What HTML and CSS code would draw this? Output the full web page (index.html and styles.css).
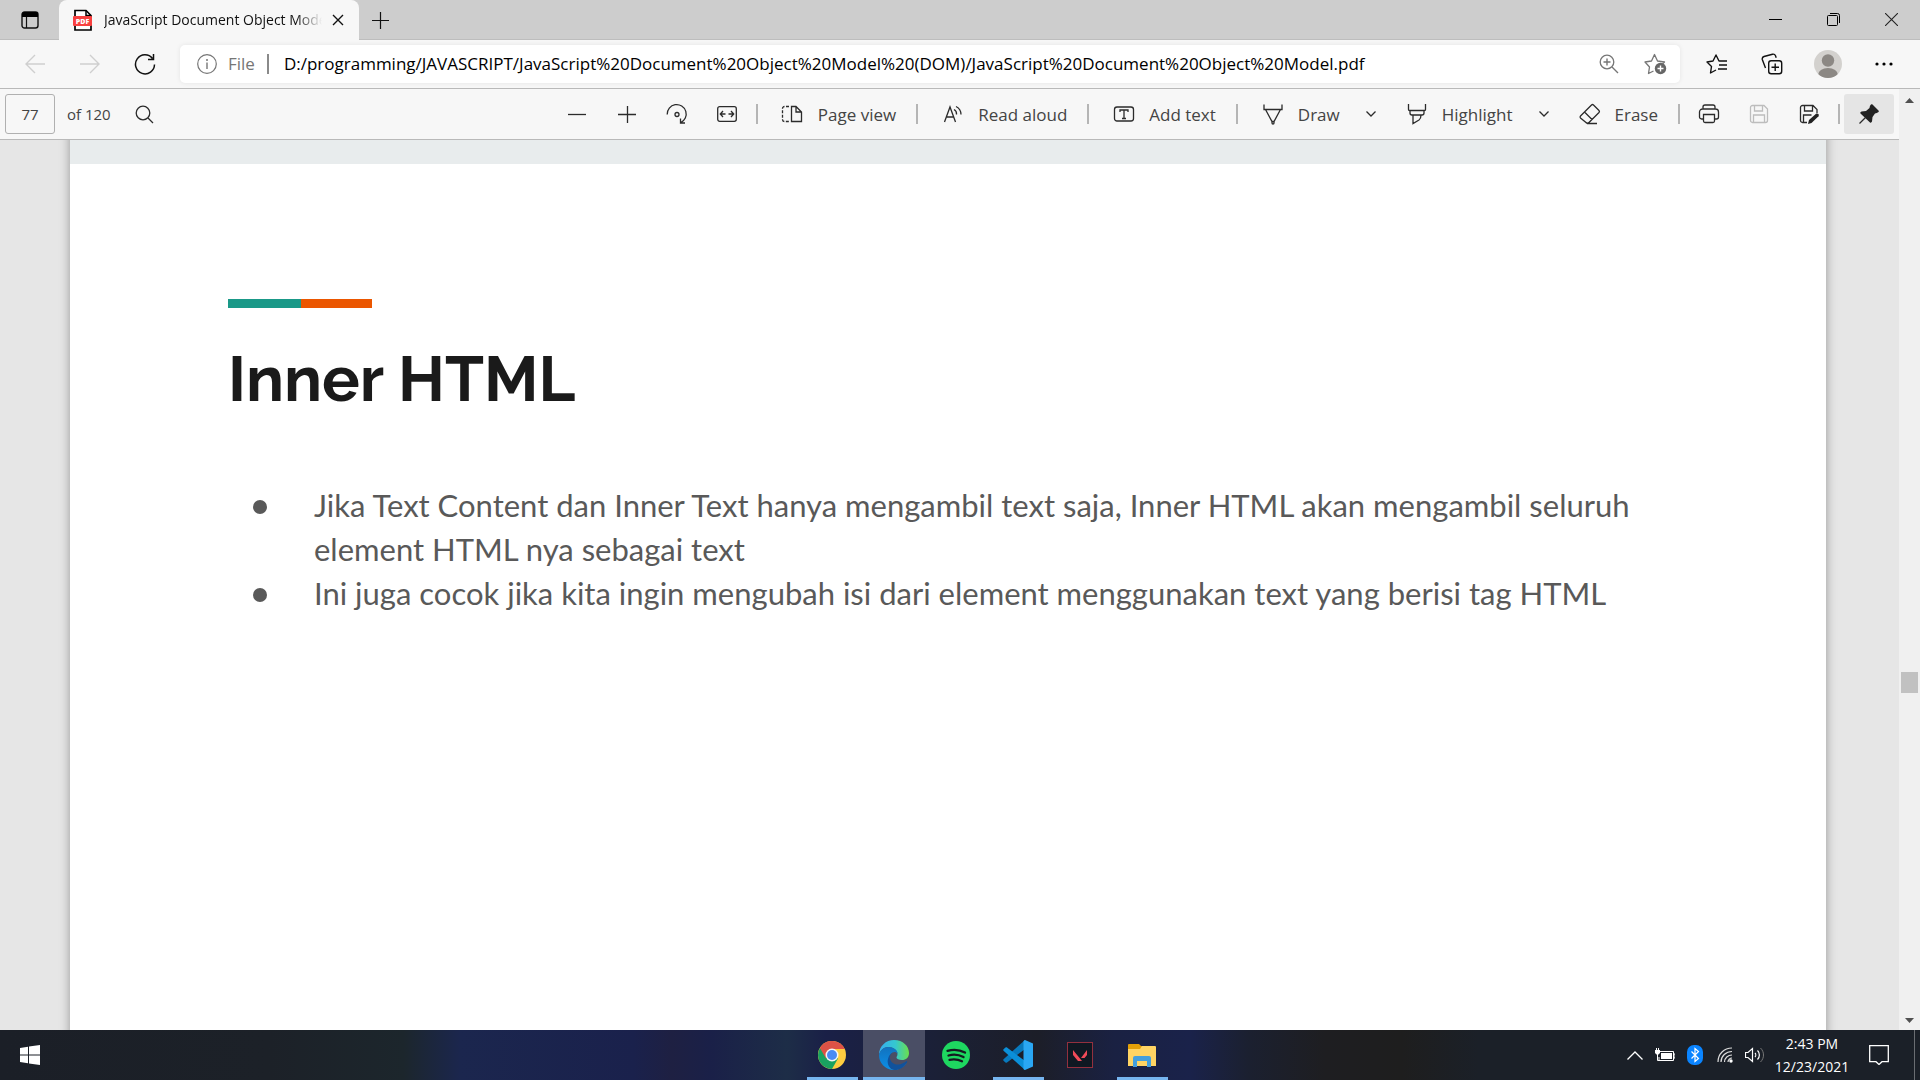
FILE: index.html
```html
<!DOCTYPE html>
<html lang="en">
<head>
<meta charset="utf-8">
<title>JavaScript Document Object Model.pdf</title>
<link rel="stylesheet" href="styles.css">
</head>
<body>
<header class="tabstrip">
  <button class="tab-actions" aria-label="Tab actions"><svg width="18" height="18" viewBox="0 0 18 18"><rect x="1" y="1" width="16" height="16" rx="2.5" fill="none" stroke="#111" stroke-width="1.4"/><path d="M1 6V3a2 2 0 0 1 2-2h12a2 2 0 0 1 2 2v3z" fill="#000"/><path d="M5.5 6v11" stroke="#111" stroke-width="1.2"/></svg></button>
  <div class="tab">
    <svg class="pdf-icon" width="20" height="22" viewBox="0 0 20 22"><path d="M2 1.500h11l5 5V21H2z" fill="#fff" stroke="#000" stroke-width="1.700"/><path d="M13 1.500v5h5" fill="none" stroke="#000" stroke-width="1.500"/><rect x="0" y="7" width="19" height="10" rx="1" fill="#f8403f"/><text x="9.500" y="15" text-anchor="middle" class="pdf-label">PDF</text></svg>
    <span class="tab-title">JavaScript Document Object Model</span>
    <button class="tab-close" aria-label="Close tab"><svg width="12" height="12" viewBox="0 0 12 12"><path d="M1 1l10 10M11 1L1 11" stroke="#111" stroke-width="1.4"/></svg></button>
  </div>
  <button class="new-tab" aria-label="New tab"><svg width="18" height="18" viewBox="0 0 18 18"><path d="M8.500 1v17M0 9.500h17" stroke="#111" stroke-width="1.2"/></svg></button>
  <div class="window-controls">
    <button aria-label="Minimize"><svg width="13" height="13" viewBox="0 0 13 13"><path d="M0 6.500h13" stroke="#000"/></svg></button>
    <button aria-label="Restore"><svg width="13" height="13" viewBox="0 0 13 13"><rect x=".5" y="2.500" width="10" height="10" rx="1" fill="none" stroke="#000"/><path d="M3 .5h7.500a2 2 0 0 1 2 2V10" fill="none" stroke="#000"/></svg></button>
    <button aria-label="Close"><svg width="13" height="13" viewBox="0 0 13 13"><path d="M0 0l13 13M13 0L0 13" stroke="#222" stroke-width="1.1"/></svg></button>
  </div>
</header>

<nav class="navbar">
  <div class="nav-buttons">
    <button aria-label="Back" disabled><svg width="20" height="20" viewBox="0 0 20 20"><path d="M20 10H1M10 1L1 10l9 9" fill="none" stroke="#cfcfcf" stroke-width="1.4"/></svg></button>
    <button aria-label="Forward" disabled><svg width="20" height="20" viewBox="0 0 20 20"><path d="M0 10h19M10 1l9 9-9 9" fill="none" stroke="#cfcfcf" stroke-width="1.4"/></svg></button>
    <button aria-label="Refresh"><svg width="22" height="22" viewBox="0 0 22 22"><path d="M20.500 11.500A9.500 9.500 0 1 1 18.500 5.500M19.500 1v5.500H14" fill="none" stroke="#111" stroke-width="1.5"/></svg></button>
  </div>
  <div class="address">
    <button class="site-info"><svg width="20" height="20" viewBox="0 0 20 20"><circle cx="10" cy="10" r="9.300" fill="none" stroke="#767676" stroke-width="1.2"/><path d="M10 8.500V15" stroke="#767676" stroke-width="1.4"/><circle cx="10" cy="6" r="1" fill="#767676"/></svg><span>File</span></button>
    <span class="address-divider"></span>
    <input class="url" aria-label="Address" value="D:/programming/JAVASCRIPT/JavaScript%20Document%20Object%20Model%20(DOM)/JavaScript%20Document%20Object%20Model.pdf">
    <button class="address-button" aria-label="Zoom"><svg width="20" height="20" viewBox="0 0 20 20"><circle cx="8" cy="8" r="6.800" fill="none" stroke="#767676" stroke-width="1.3"/><path d="M13 13l6 6M8 4.500v7M4.500 8h7" stroke="#767676" stroke-width="1.4"/></svg></button>
    <button class="address-button" aria-label="Add to favorites"><svg width="23" height="22" viewBox="0 0 23 22"><path d="M9.500 18L4.500 20.500l1-6.500L1 9l6.500-1L10.500 1.500 13.500 8l7 1-2 2" fill="none" stroke="#767676" stroke-width="1.3" stroke-linejoin="round"/><circle cx="16.500" cy="15.500" r="5.700" fill="#666"/><path d="M16.500 12.500v6M13.500 15.500h6" stroke="#fff" stroke-width="1.4"/></svg></button>
  </div>
  <div class="nav-actions">
    <button aria-label="Favorites"><svg width="21" height="20" viewBox="0 0 21 20"><path d="M10 16l-5.500 3 1-6.500L1 8l6-1 3-6 3 6h8M13 11h8M12 15h9" fill="none" stroke="#111" stroke-width="1.4" stroke-linejoin="round"/></svg></button>
    <button aria-label="Collections"><svg width="22" height="22" viewBox="0 0 22 22"><rect x="7.700" y="7.700" width="13" height="13" rx="2.500" fill="none" stroke="#111" stroke-width="1.4"/><path d="M14.200 10.500v7.500M10.500 14.200H18M4.500 15L1.300 6.500C1 5 1.500 4 3 3.500l8.500-2.300c1.500-.3 2.500.3 3 1.500l.7 2" fill="none" stroke="#111" stroke-width="1.4"/></svg></button>
    <button aria-label="Profile"><svg width="28" height="28" viewBox="0 0 28 28"><clipPath id="avatar"><circle cx="14" cy="14" r="14"/></clipPath><g clip-path="url(#avatar)"><path d="M0 0h28v28H0z" fill="#d3d1ce"/><circle cx="14" cy="10.500" r="6.200" fill="#8c8884"/><ellipse cx="14" cy="25" rx="10" ry="7" fill="#8c8884"/></g></svg></button>
    <button aria-label="Settings and more"><svg width="18" height="4" viewBox="0 0 18 4"><g fill="#000"><circle cx="2" cy="2" r="1.600"/><circle cx="9" cy="2" r="1.600"/><circle cx="16" cy="2" r="1.600"/></g></svg></button>
  </div>
</nav>

<div class="viewer">
<main class="pane">
  <div class="toolbar">
    <input class="page-number" aria-label="Page number" value="77">
    <span class="page-count">of 120</span>
    <button class="tool search" aria-label="Search"><svg width="19" height="19" viewBox="0 0 19 19"><circle cx="8" cy="8" r="6.800"/><path d="M13 13l5 5"/></svg></button>
    <div class="tools">
      <button class="tool" aria-label="Zoom out"><svg width="18" height="18" viewBox="0 0 18 18"><path d="M0 9.500h18"/></svg></button>
      <button class="tool" aria-label="Zoom in"><svg width="18" height="18" viewBox="0 0 18 18"><path d="M0 9.500h18M9.500 1v17"/></svg></button>
      <button class="tool" aria-label="Rotate"><svg width="22" height="22" viewBox="0 0 22 22"><path d="M1.200 11.500A9.500 9.500 0 1 1 14.500 19.800M14.500 15.500v4.500h4.500"/><circle cx="11" cy="11.500" r="2"/></svg></button>
      <button class="tool" aria-label="Fit to width"><svg width="20" height="16" viewBox="0 0 20 16"><rect x=".7" y=".7" width="18.600" height="14.600" rx="2"/><path d="M3.500 8h5M11.500 8h5M6 5L3.300 8 6 11M14 5l2.700 3L14 11"/></svg></button>
      <span class="divider"></span>
      <button class="tool labelled"><svg width="24" height="20" viewBox="0 0 24 20"><path d="M10.500 2.700V17.500h10V8l-5.500-5.500h-4.500zM15 2.500V8h5.500"/><path d="M8 2.500H3.500a2 2 0 0 0-2 2v11a2 2 0 0 0 2 2H8" stroke-dasharray="3 1.500"/></svg><span>Page view</span></button>
      <span class="divider"></span>
      <button class="tool labelled"><svg width="24" height="20" viewBox="0 0 24 20"><path d="M3.500 18L9 3l5.500 15M5.300 13h7.400M13 5.500a5 5 0 0 1 2.500 5M15 2.500a9 9 0 0 1 5 8"/></svg><span>Read aloud</span></button>
      <span class="divider"></span>
      <button class="tool labelled"><svg width="24" height="20" viewBox="0 0 24 20"><rect x="2.500" y="3" width="19" height="14" rx="2.500"/><path d="M8 8V6h8v2M12 6v8.500M10 14.500h4"/></svg><span>Add text</span></button>
      <span class="divider"></span>
      <button class="tool labelled"><svg width="24" height="22" viewBox="0 0 24 22"><path d="M3 1.500v5h18v-5M4.500 6.500L11 18.500h2l6.500-12M11 18.500V20a1 1 0 0 0 2 0v-1.500"/></svg><span>Draw</span></button>
      <button class="tool menu" aria-label="Draw options"><svg width="10" height="6" viewBox="0 0 10 6"><path d="M.5.500L5 5 9.500.500"/></svg></button>
      <button class="tool labelled"><svg width="24" height="22" viewBox="0 0 24 22"><path d="M3.500 1v5.500a1 1 0 0 0 1 1h15a1 1 0 0 0 1-1V1M5 7.500v2.500a2 2 0 0 0 2 2h10a2 2 0 0 0 2-2V7.500M8 12v8.500l6-3.500c1.500-1 2-2 2-5"/></svg><span>Highlight</span></button>
      <button class="tool menu" aria-label="Highlight options"><svg width="10" height="6" viewBox="0 0 10 6"><path d="M.5.500L5 5 9.500.500"/></svg></button>
      <button class="tool labelled"><svg width="24" height="22" viewBox="0 0 24 22"><path d="M2.500 13L13.500 2a1.500 1.500 0 0 1 2 0l5.500 5.500a1.500 1.500 0 0 1 0 2L11 19.500a2 2 0 0 1-3 0L2.500 15a1.500 1.500 0 0 1 0-2zM6.500 9l7.500 7.500M9 20.500h10"/></svg><span>Erase</span></button>
      <span class="divider"></span>
      <button class="tool" aria-label="Print"><svg width="22" height="20" viewBox="0 0 22 20"><path d="M5 15H3.500a2 2 0 0 1-2-2V8a3 3 0 0 1 3-3h13a3 3 0 0 1 3 3v5a2 2 0 0 1-2 2H17M5 5V3a2 2 0 0 1 2-2h8a2 2 0 0 1 2 2v2M5.500 10.500h11V17a1.500 1.500 0 0 1-1.500 1.500H7A1.500 1.500 0 0 1 5.500 17z"/></svg></button>
      <button class="tool" aria-label="Save" disabled><svg width="20" height="20" viewBox="0 0 20 20"><path d="M1.500 3.500a2 2 0 0 1 2-2H15l3.500 3.500v11.500a2 2 0 0 1-2 2h-13a2 2 0 0 1-2-2zM5.500 1.500V7h8V1.500M4.500 18.500V11h11v7.500"/></svg></button>
      <button class="tool" aria-label="Save as"><svg width="20" height="20" viewBox="0 0 20 20"><path d="M8 18.500H3.500a2 2 0 0 1-2-2v-13a2 2 0 0 1 2-2H14l4 4V9M5.500 1.500V7h8V1.500M4.500 18.500V11h8"/><path class="solid" d="M9 20l1-4 7-6.300c2-1 3.500.8 2.500 2.500L12.500 19z"/></svg></button>
      <span class="divider"></span>
      <button class="tool pinned" aria-label="Unpin toolbar" aria-pressed="true"><svg width="20" height="20" viewBox="0 0 20 20"><path class="solid" d="M12 .5c.5-.5 1-.5 1.500 0l6 6c.5.500.5 1 0 1.500-1 1-2.500 1-3.500 1.500L13.500 13l-.5 4.500c-.5 1-1 1.500-2 1L1.500 9.500c-.5-1 0-1.500 1-2L7 7l3.500-3c.3-1.500.5-2.500 1.500-3.500z"/><path d="M6.500 13.500L.5 19.500"/></svg></button>
    </div>
  </div>
  <div class="canvas">
    <div class="pages">
      <div class="previous-page"></div>
      <article class="slide">
        <div class="accent"></div>
        <h1>Inner HTML</h1>
        <ul>
          <li>Jika Text Content dan Inner Text hanya mengambil text saja, Inner HTML akan mengambil seluruh element HTML nya sebagai text</li>
          <li>Ini juga cocok jika kita ingin mengubah isi dari element menggunakan text yang berisi tag HTML</li>
        </ul>
      </article>
    </div>
  </div>
</main>
<div class="scrollbar">
  <svg width="9" height="5" viewBox="0 0 9 5"><path d="M0 5l4.500-5L9 5z" fill="#505050"/></svg>
  <div class="track"><div class="thumb"></div></div>
  <svg width="9" height="5" viewBox="0 0 9 5"><path d="M0 0l4.500 5L9 0z" fill="#505050"/></svg>
</div>
</div>

<footer class="taskbar">
  <button class="start" aria-label="Start"><svg width="20" height="20" viewBox="0 0 20 20"><path d="M0 3l8-1.200V9.500H0zM9 1.600L20 0v9.500H9zM0 10.500h8v7.700L0 17zM9 10.500h11V20L9 18.400z" fill="#fff"/></svg></button>
  <div class="apps">
    <button class="app running" aria-label="Chrome"><svg width="28" height="28" viewBox="0 0 28 28"><circle cx="14" cy="14" r="14" fill="#ffcd40"/><path d="M14 14L1.900 7A14 14 0 0 0 14 28l6-10.500z" fill="#1aa260"/><path d="M1.900 7A14 14 0 0 1 26.700 8H14L8 17.500z" fill="#de5246"/><circle cx="14" cy="14" r="6.500" fill="#f5f5f5"/><circle cx="14" cy="14" r="5" fill="#4a8af4"/></svg></button>
    <button class="app active" aria-label="Edge"><svg width="30" height="30" viewBox="0 0 30 30"><defs><linearGradient id="edge-top"><stop offset="0" stop-color="#35aef0"/><stop offset=".55" stop-color="#35c7cf"/><stop offset="1" stop-color="#6bdf4b"/></linearGradient><linearGradient id="edge-left" x2="0" y2="1"><stop offset="0" stop-color="#1172be"/><stop offset="1" stop-color="#0c8fe8"/></linearGradient></defs><path d="M0 15C0 6 7 0 15 0c9 0 15 6 15 13 0 4.500-3 7-7 7-3 0-5.500-1-5.500-2.500 0-1 1-1.500 1-3.500C18.500 10 14 7 9 7 4 7 1 11 0 15z" fill="url(#edge-top)"/><path d="M14 29.900C6 29.500 0 23 0 15 1 10 5 7 9.500 7c5 0 9 3 9 6.500-1-1.500-3-2-5-1-6 3-3 13 5 13 4 0 6-.5 9-2.500-3 4.500-8 7.200-13.500 6.900z" fill="url(#edge-left)"/><path d="M13.500 12.500c-6 5-.5 13 6 12 3 0 6-2 8-3.500 1 0 .8 1.200 0 2.200-3 4.300-7 6.800-12 6.800-7-.5-10-12-2-17.500z" fill="#11529c"/></svg></button>
    <button class="app" aria-label="Spotify"><svg width="28" height="28" viewBox="0 0 28 28"><circle cx="14" cy="14" r="14" fill="#1ed760"/><path d="M5.500 9.800c6-1.700 12.500-1 17.500 1.800M6.500 14.500c5-1.400 10.500-.8 15 1.600M7.500 18.800c4.500-1 8.500-.6 12.500 1.500" fill="none" stroke="#151a20" stroke-width="2.300" stroke-linecap="round"/></svg></button>
    <button class="app running" aria-label="Visual Studio Code"><svg width="30" height="30" viewBox="0 0 30 30"><path d="M22 0L.8 19c-.8.800-.8 1.500 0 2l1.700 1.500c.5.300 1 .3 1.500 0L22 9z" fill="#0879bd"/><path d="M4 7.500c-.5-.4-1-.4-1.500 0L.8 9c-.8.500-.8 1.200 0 2L22 30V21z" fill="#0b8fd8"/><path d="M22 0l8 3.500v23L22 30c-1 0-1.500-1-1.500-1.500V1.500S21 0 22 0z" fill="#2aa7f3"/></svg></button>
    <button class="app" aria-label="Valorant"><svg width="26" height="26" viewBox="0 0 26 26"><rect x=".5" y=".5" width="25" height="25" fill="#0f1822" stroke="#93303e"/><path d="M6 8l9 11h-4l-5-6zM20 8v5l-2.500 3H14z" fill="#f04b59"/></svg></button>
    <button class="app running" aria-label="File Explorer"><svg width="28" height="23" viewBox="0 0 28 23"><path d="M0 1a1 1 0 0 1 1-1h10l2 2h14v20H0z" fill="#e3a008"/><path d="M0 5h12l2-3h13a1 1 0 0 1 1 1v19H0z" fill="#ffd463"/><path d="M5 23V14a2 2 0 0 1 2-2h14a2 2 0 0 1 2 2v9h-4v-6H9v6z" fill="#449fdc"/></svg></button>
  </div>
  <div class="tray">
    <button aria-label="Show hidden icons"><svg width="16" height="9" viewBox="0 0 16 9"><path d="M.5 8.500L8 1l7.500 7.500" fill="none" stroke="#fff" stroke-width="1.3"/></svg></button>
    <button aria-label="Battery"><svg width="20" height="14" viewBox="0 0 20 14"><path d="M5 3.500h13.500v9H4V9M18.500 6H20v4h-1.500" fill="none" stroke="#fff"/><path d="M6 5h11v6H6zM0 2h5v3L3.500 6.500h-2L0 5z" fill="#fff"/><path d="M1.500 0v2M3.500 0v2M2.500 6v6.500H5" fill="none" stroke="#fff"/></svg></button>
    <button aria-label="Bluetooth"><svg width="16" height="20" viewBox="0 0 16 20"><rect width="16" height="20" rx="7" fill="#0a84ff"/><path d="M4.500 6.500l7 7L8 16.500v-13L11.500 6.500l-7 7" fill="none" stroke="#fff" stroke-width="1.2"/></svg></button>
    <button aria-label="Wi-Fi"><svg width="16" height="16" viewBox="0 0 16 16"><g fill="none" stroke="#ddd" stroke-width="1.200"><path d="M1 15C1 7 7 1 15 1M4 15C4 9 9 4.500 15 4.500M7.500 15c0-4 3.500-7 7.500-7"/><path d="M11 15c0-2 2-4 4-4"/></g><circle cx="14" cy="14" r="1.700" fill="#fff"/></svg></button>
    <button aria-label="Volume"><svg width="20" height="16" viewBox="0 0 20 16"><path d="M.5 5.500H3L7.500 1.500v13L3 10.500H.5zM10 6c1 1 1 3 0 4M12.500 3.500c2.500 2.500 2.500 6.500 0 9" fill="none" stroke="#fff" stroke-width="1.200"/><path d="M15.500 1c4 4 4 10 0 14" fill="none" stroke="#777"/></svg></button>
    <button class="clock"><span>2:43 PM</span><span>12/23/2021</span></button>
    <button class="notifications" aria-label="Notifications"><svg width="20" height="20" viewBox="0 0 20 20"><path d="M.7.700h18.600v16H13L10 19.500 7 16.700H.7z" fill="none" stroke="#fff" stroke-width="1.300"/></svg></button>
    <button class="show-desktop" aria-label="Show desktop"></button>
  </div>
</footer>
</body>
</html>
```
FILE: styles.css
```css
* { box-sizing: border-box; }
body {
  margin: 0;
  height: 100vh;
  display: flex;
  flex-direction: column;
  overflow: hidden;
  font-family: "Segoe UI", "Open Sans", sans-serif;
  background: #e6e6e6;
}
button {
  display: flex;
  align-items: center;
  justify-content: center;
  margin: 0;
  padding: 0;
  border: 0;
  background: none;
  font: inherit;
  color: inherit;
}
svg { display: block; flex: none; }
input { font: inherit; }

/* Tab strip */
.tabstrip {
  flex: none;
  display: flex;
  height: 40px;
  background: #cdcdcd;
  border-bottom: 1px solid #bdbdbd;
}
.tab-actions { width: 59px; }
.tab {
  display: flex;
  align-items: center;
  width: 300px;
  height: 40px;
  padding: 0 11px 0 14px;
  border-radius: 8px 8px 0 0;
  background: #f7f7f7;
}
.pdf-label { font: 800 7px "Open Sans", sans-serif; fill: #fff; }
.tab-title {
  flex: 1;
  min-width: 0;
  margin-left: 11px;
  overflow: hidden;
  white-space: nowrap;
  font-size: 14px;
  line-height: 20px;
  color: #111;
  mask-image: linear-gradient(to right, #000 88%, transparent);
}
.tab-close { width: 20px; height: 20px; margin-left: 6px; }
.new-tab { width: 44px; }
.window-controls { display: flex; margin-left: auto; }
.window-controls button { width: 58px; }

/* Address row */
.navbar {
  flex: none;
  display: flex;
  align-items: center;
  height: 49px;
  background: #f7f7f7;
  border-bottom: 1px solid #b9b9b9;
}
.nav-buttons { display: flex; padding: 0 8px 0 7px; }
.nav-buttons button { width: 55px; height: 38px; }
.address {
  flex: 1;
  display: flex;
  align-items: center;
  height: 38px;
  padding: 0 2px 0 17px;
  border-radius: 5px;
  background: #fff;
  box-shadow: 0 0 5px rgba(0, 0, 0, .08);
}
.site-info { gap: 11px; font-size: 17px; color: #767676; }
.site-info span { padding-bottom: 2px; }
.address-divider { width: 2px; height: 20px; margin: 0 15px 0 12px; background: #8a8a8a; }
.url {
  flex: 1;
  min-width: 0;
  padding: 0 0 2px;
  border: 0;
  outline: 0;
  background: none;
  font-size: 17px;
  color: #000;
}
.address-button { width: 46px; height: 38px; }
.nav-actions { display: flex; padding: 0 8px; }
.nav-actions button { width: 56px; height: 38px; }

/* PDF viewer */
.viewer { flex: 1; display: flex; min-height: 0; }
.pane { flex: 1; display: flex; flex-direction: column; min-width: 0; }
.toolbar {
  flex: none;
  display: flex;
  align-items: center;
  height: 51px;
  padding: 0 5px;
  background: #f7f7f7;
  border-bottom: 1px solid #b9b9b9;
  font-size: 17px;
  color: #444;
}
.page-number {
  width: 50px;
  height: 40px;
  padding: 0;
  border: 1px solid #b0b0b0;
  border-radius: 3px;
  background: transparent;
  text-align: center;
  font-size: 15px;
  color: #444;
}
.page-count { margin-left: 12px; font-size: 15px; }
.tools { display: flex; align-items: center; margin-left: auto; }
.tool { width: 50px; height: 40px; border-radius: 3px; }
.tool svg { fill: none; stroke: #2b2b2b; stroke-width: 1.3; }
.tool .solid { fill: #222; stroke: none; }
.tool:disabled svg { stroke: #bdbdbd; }
.search { margin-left: 9px; }
.labelled { width: auto; gap: 13px; padding: 0 16px 0 19px; white-space: nowrap; }
.menu { width: 30px; }
.pinned { background: #e5e5e5; }
.divider { width: 2px; height: 20px; margin: 0 4px; background: #b5b5b5; }

.canvas {
  flex: 1;
  min-height: 0;
  padding: 0 73px 0 70px;
  overflow: hidden;
  background: #e6e6e6;
}
/* The pages run past both ends of the scrolled view */
.pages {
  display: flex;
  flex-direction: column;
  height: calc(100% + 40px);
  margin-top: -20px;
  box-shadow: 0 0 10px rgba(0, 0, 0, .35);
}
.previous-page { flex: none; height: 44px; background: #e8eced; }
.slide { flex: 1; padding: 135px 158px 0; background: #fff; }
.accent {
  width: 144px;
  height: 9px;
  background: linear-gradient(to right, #1a9988 73px, #eb5600 73px);
}
h1 {
  margin: 33px 0 0;
  font-family: Raleway, Lato, sans-serif;
  font-size: 63px;
  line-height: 76px;
  font-weight: 700;
  color: #1a1a1a;
}
ul {
  margin: 66px 0 0;
  padding: 0;
  list-style: none;
  font-family: Lato, sans-serif;
  font-size: 31px;
  line-height: 44px;
  color: #595959;
}
li { display: flex; }
li::before {
  content: "";
  flex: none;
  width: 14px;
  height: 14px;
  margin: 17px 47px 0 25px;
  border-radius: 50%;
  background: #595959;
}

.scrollbar {
  flex: none;
  display: flex;
  flex-direction: column;
  align-items: center;
  width: 21px;
  padding: 9px 0 7px;
  background: #f0f0f0;
}
.track { flex: 1; width: 17px; padding-top: 569px; }
.thumb { height: 21px; background: #c1c1c1; }

/* Taskbar */
.taskbar {
  flex: none;
  display: grid;
  grid-template-columns: 1fr auto 1fr;
  height: 50px;
  background: linear-gradient(to right, #1b1f27 0%, #1c2128 14%, #1c262c 21%, #1b264e 24%, #1a214c 33%, #1e2042 35%, #1a2048 37%, #1d2d47 41%, #1a2047 43%, #1b2036 49%, #1c1e28 54%, #1a2142 58%, #1a224a 62%, #1b2030 65%, #1e1e21 69%, #1e1e1e 73%, #1b2028 77%, #1b2028 100%);
  color: #fff;
}
.start { width: 60px; }
.apps { display: flex; padding-left: 54px; }
.app { position: relative; width: 62px; height: 50px; }
.active { background: #4a4e65; }
.running::after,
.active::after {
  content: "";
  position: absolute;
  bottom: 0;
  left: 6px;
  right: 5px;
  height: 3px;
  background: #76b5ef;
}
.active::after { left: 0; right: 0; }
.tray { display: flex; justify-content: flex-end; }
.tray button { width: 30px; }
.tray .clock { flex-direction: column; width: 84px; font-size: 14px; line-height: 23px; }
.tray .notifications { width: 50px; margin-right: 10px; }
.tray .show-desktop { width: 6px; border-left: 1px solid #6a6d72; }
```
